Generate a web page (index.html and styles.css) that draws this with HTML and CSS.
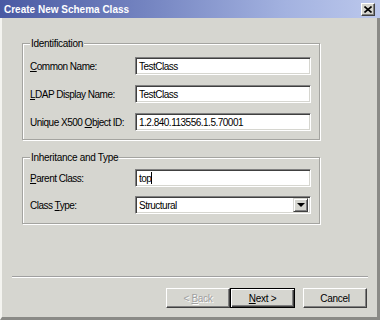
FILE: index.html
```html
<!DOCTYPE html>
<html lang="en">
<head>
    <meta http-equiv="Content-Type" content="text/html; charset=UTF-8">
    <title>Create New Schema Class</title>
    <link rel="stylesheet" href="styles.css">
</head>
<body>
    <div class="window">
        <!-- Title Bar -->
        <div class="titlebar">
            <span class="title">Create New Schema Class</span>
            <span class="close">
                <svg width="8" height="7" viewBox="0 0 8 7">
                    <path d="M0.5 0.5 L7.5 6.5 M7.5 0.5 L0.5 6.5" stroke="#000" stroke-width="1.6" fill="none"/>
                </svg>
            </span>
        </div>

        <div class="dialog">
            <!-- Identification Group -->
            <fieldset class="group group-ident">
                <legend>Identification</legend>
                <div class="row">
                    <label><u>C</u>ommon Name:</label>
                    <div class="field">TestClass</div>
                </div>
                <div class="row">
                    <label><u>L</u>DAP Display Name:</label>
                    <div class="field">TestClass</div>
                </div>
                <div class="row">
                    <label>Unique X500 <u>O</u>bject ID:</label>
                    <div class="field">1.2.840.113556.1.5.70001</div>
                </div>
            </fieldset>

            <!-- Inheritance Group -->
            <fieldset class="group group-inherit">
                <legend>Inheritance and Type</legend>
                <div class="row">
                    <label><u>P</u>arent Class:</label>
                    <div class="field"><span>top</span><span class="caret"></span></div>
                </div>
                <div class="row">
                    <label>Class <u>T</u>ype:</label>
                    <div class="field select">
                        <span class="select-text">Structural</span>
                        <span class="select-btn"><span class="arrow"></span></span>
                    </div>
                </div>
            </fieldset>

            <div class="separator"></div>

            <!-- Buttons -->
            <div class="buttons">
                <div class="btn disabled"><span>&lt; <u>B</u>ack</span></div>
                <div class="btn default"><span><u>N</u>ext &gt;</span></div>
                <div class="btn cancel"><span>Cancel</span></div>
            </div>
        </div>
    </div>
</body>
</html>
```

FILE: styles.css
```css
/* General Reset */
* {
    margin: 0;
    padding: 0;
    box-sizing: border-box;
}

body {
    width: 380px;
    height: 320px;
    overflow: hidden;
    background-color: #d6d6d0;
    font-family: "Liberation Sans", Arial, sans-serif;
    font-size: 10px;
    color: #000;
}

/* Window Frame */
.window {
    width: 380px;
    height: 320px;
    display: flex;
    flex-direction: column;
}

.titlebar {
    height: 18px;
    flex-shrink: 0;
    display: flex;
    align-items: center;
    justify-content: space-between;
    padding: 0 5px 0 4px;
    background: linear-gradient(90deg, #4a5aa3 0%, #7686c2 40%, #a3b2e0 75%, #bcc8ec 100%);
}

.title {
    color: #fff;
    font-weight: bold;
    font-size: 10px;
}

.close {
    width: 14px;
    height: 13px;
    display: flex;
    align-items: center;
    justify-content: center;
    background-color: #d6d6d0;
    border-top: 1px solid #fff;
    border-left: 1px solid #fff;
    border-right: 1px solid #404040;
    border-bottom: 1px solid #404040;
    box-shadow: inset -1px -1px 0 #808080;
}

/* Dialog Body */
.dialog {
    flex-grow: 1;
    border-left: 2px solid #f4f4f0;
    border-right: 3px solid #8a8a86;
    border-bottom: 3px solid #8a8a86;
    padding-top: 19px;
}

/* Group Boxes */
.group {
    width: 298px;
    margin-left: 20px;
    padding: 7px 7px 8px 7px;
    border: 1px solid #a4a4a0;
    box-shadow: inset 1px 1px 0 #fff, 1px 1px 0 #fff;
    display: flex;
    flex-direction: column;
    gap: 10px;
}

.group legend {
    padding: 0 1px;
    line-height: 13px;
    background-color: #d6d6d0;
    letter-spacing: -0.3px;
}

.group-inherit {
    margin-top: 11px;
    padding-top: 5px;
    padding-bottom: 9px;
    gap: 9px;
}

.row {
    display: flex;
    align-items: center;
    height: 18px;
}

.row label {
    width: 105px;
    letter-spacing: -0.5px;
}

/* Sunken Fields */
.field {
    width: 176px;
    height: 18px;
    background-color: #fff;
    border-top: 1px solid #808080;
    border-left: 1px solid #808080;
    border-right: 1px solid #fff;
    border-bottom: 1px solid #fff;
    box-shadow: inset 1px 1px 0 #404040, inset -1px -1px 0 #d6d6d0;
    padding-left: 3px;
    display: flex;
    align-items: center;
    letter-spacing: -0.5px;
}

.caret {
    display: inline-block;
    width: 1px;
    height: 12px;
    background-color: #000;
}

.select {
    justify-content: space-between;
    padding-right: 2px;
}

.select-btn {
    width: 15px;
    height: 14px;
    display: flex;
    align-items: center;
    justify-content: center;
    background-color: #d6d6d0;
    border-top: 1px solid #d6d6d0;
    border-left: 1px solid #d6d6d0;
    border-right: 1px solid #404040;
    border-bottom: 1px solid #404040;
    box-shadow: inset 1px 1px 0 #fff, inset -1px -1px 0 #808080;
}

.arrow {
    width: 0;
    height: 0;
    border-left: 4px solid transparent;
    border-right: 4px solid transparent;
    border-top: 4px solid #000;
}

/* Separator */
.separator {
    width: 356px;
    margin: 52px 0 0 10px;
    border-top: 1px solid #a0a0a0;
    border-bottom: 1px solid #fff;
}

/* Buttons */
.buttons {
    display: flex;
    justify-content: flex-end;
    padding-right: 10px;
    margin-top: 10px;
}

.btn {
    width: 64px;
    height: 20px;
    display: flex;
    align-items: center;
    justify-content: center;
    border-top: 1px solid #fff;
    border-left: 1px solid #fff;
    border-right: 1px solid #404040;
    border-bottom: 1px solid #404040;
    box-shadow: inset -1px -1px 0 #808080;
    letter-spacing: -0.3px;
}

.btn.disabled {
    color: #a0a0a0;
    text-shadow: 1px 1px 0 #fff;
}

.btn.default {
    width: 65px;
    border: 1px solid #000;
    box-shadow: inset 1px 1px 0 #fff, inset -1px -1px 0 #404040, inset -2px -2px 0 #808080;
}

.btn.cancel {
    margin-left: 8px;
}
```
